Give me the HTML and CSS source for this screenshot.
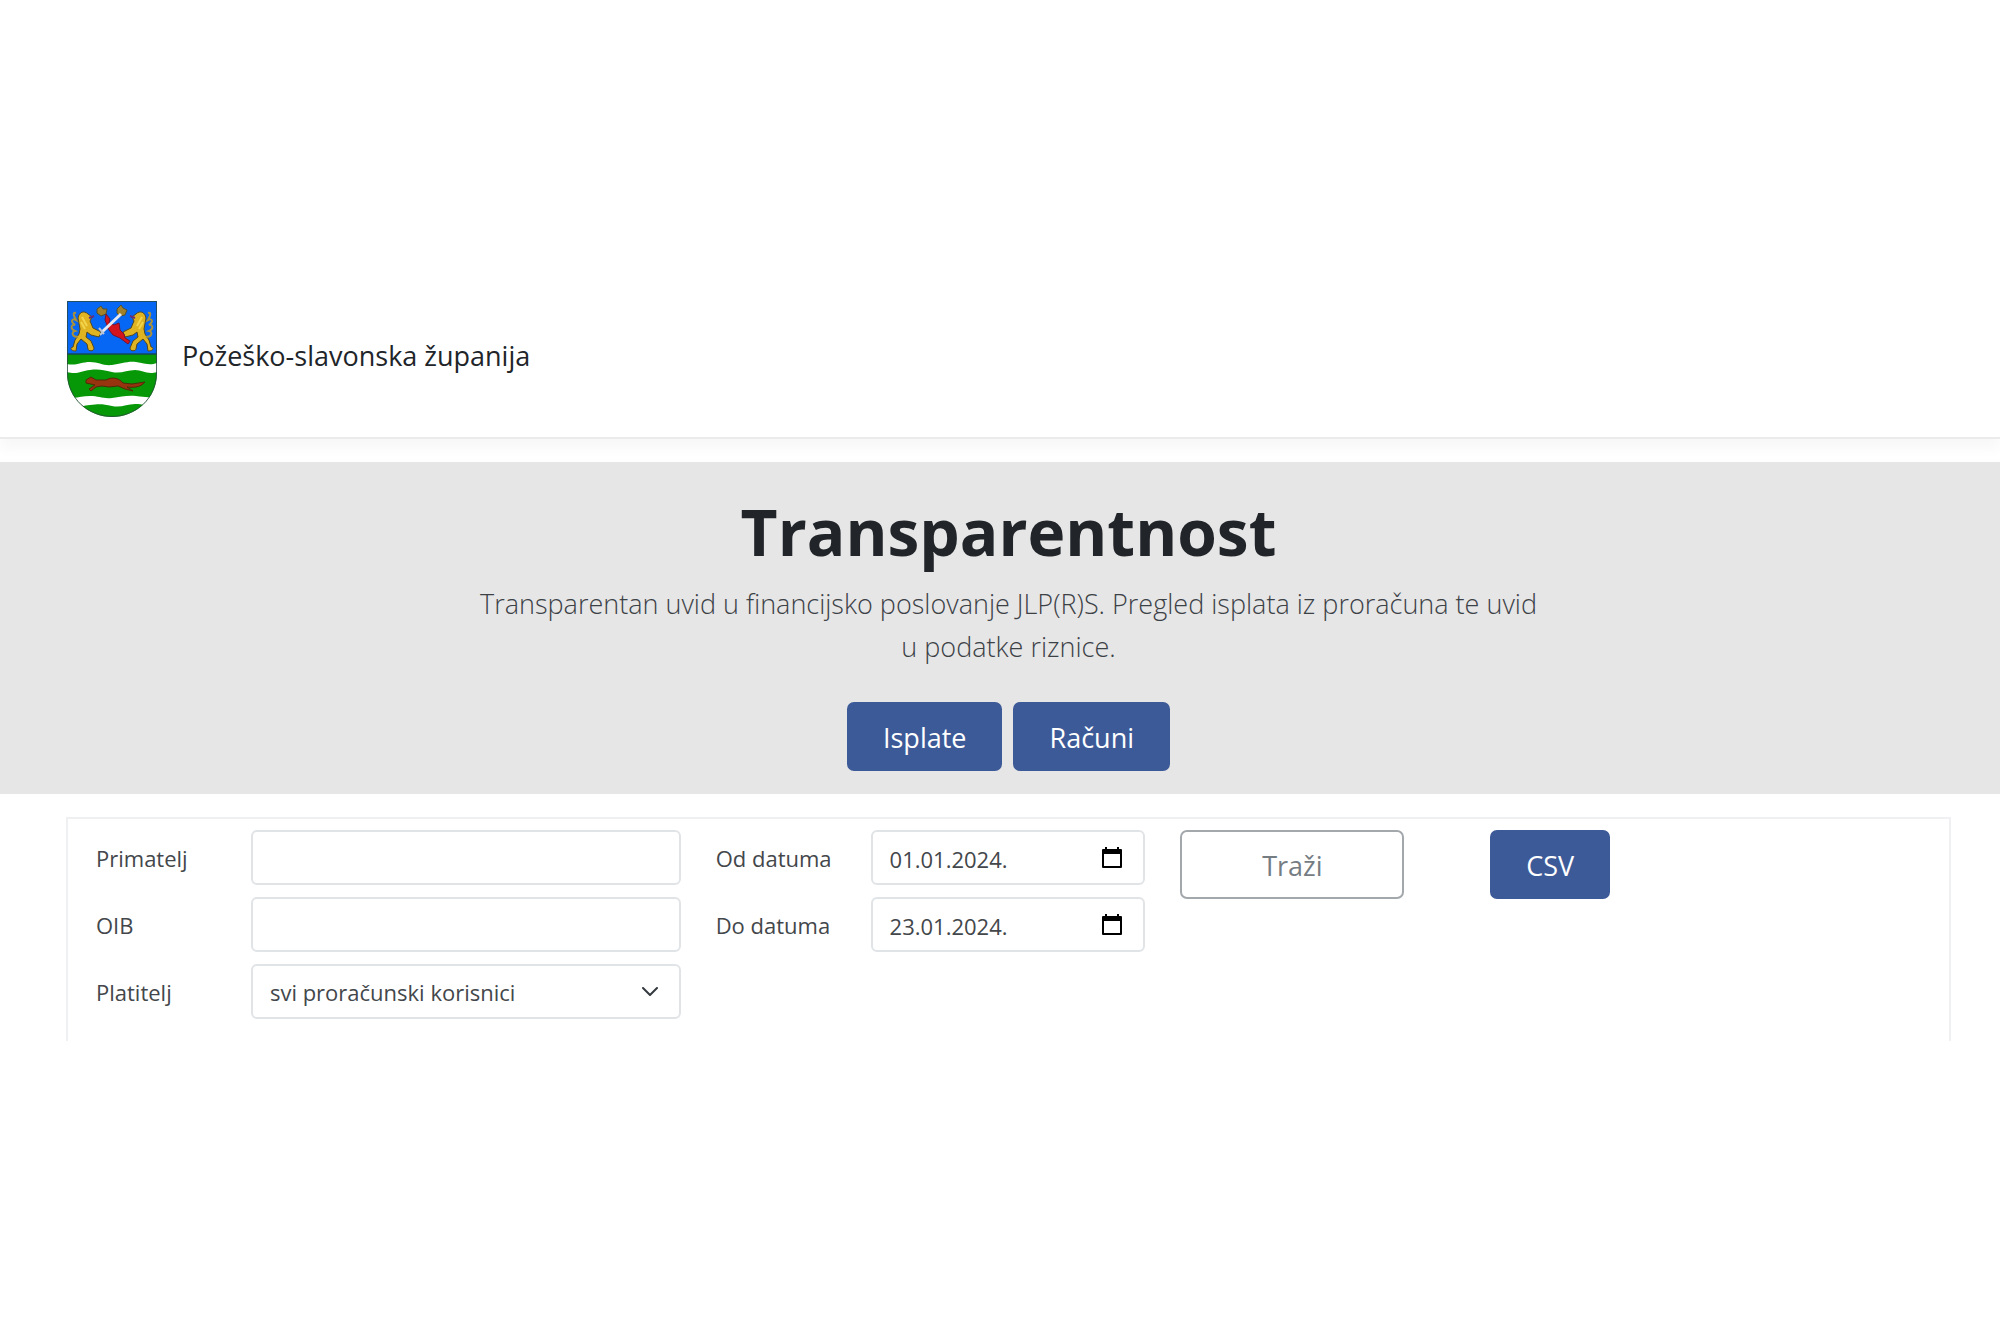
FILE: index.html
```html
<!DOCTYPE html>
<html lang="hr">
<head>
<meta charset="utf-8">
<meta name="viewport" content="width=device-width, initial-scale=1">
<title>Transparentnost</title>
<link rel="stylesheet" href="styles.css">
</head>
<body>
<header class="site-header">
  <svg class="crest" viewBox="0 0 90 116" aria-hidden="true">
    <defs>
      <clipPath id="shield"><path d="M0 0H90V72C90 98 68 116 45 116S0 98 0 72Z"/></clipPath>
      <g id="lion">
        <path d="M9 50C3 50 3 46 6 46L8 39L12 33L13 28L11 17C12 11 17 9 21 13L25 16L23 20L26 27L34 31L32 36L24 34L20 31L19 36L24 40L27 47C27 51 21 50 21 48L20 43L14 38L10 43Z" fill="#e0b323" stroke="#57481b" stroke-width="1"/>
        <path d="M11 36C5 36 4 31 8 30C3 28 4 23 8 24C3 20 5 17 9 19C6 14 6 11 9 12" fill="none" stroke="#a8913a" stroke-width="2"/>
        <path d="M15 16L20 25M14 21L18 28" stroke="#f2d54c" stroke-width="2" fill="none"/>
        <path d="M22 17L27 15" stroke="#6a2c79" stroke-width="2"/>
      </g>
    </defs>
    <g clip-path="url(#shield)">
      <path d="M0 0H90V54H0Z" fill="#0667f5"/>
      <path d="M0 53H90V116H0Z" fill="#069806"/>
      <path d="M0 53H90" stroke="#174558" stroke-width="1.5"/>
      <path d="M0 63C9 65 14 61 23 61S36 65 45 64S60 60 69 61S82 65 90 62V71C80 74 76 69 68 69S54 73 45 71S32 68 23 69S10 74 0 71Z" fill="#fff"/>
      <path d="M0 96C9 98 14 95 23 95S36 98 45 97S60 94 69 95S82 97 90 95V105C80 105 76 103 68 103S54 107 45 105S32 103 23 104S10 107 0 105Z" fill="#fff"/>
      <path d="M19 79L24 76L29 79L39 79C46 75 53 78 56 82L65 83L78 81C74 86 67 87 60 86L66 90L58 88L51 85L42 86L35 85L29 86L24 90L22 88L28 84L19 82Z" fill="#97330f" stroke="#4c2d08" stroke-width="1"/>
      <use href="#lion"/>
      <use href="#lion" transform="translate(90 0) scale(-1 1)"/>
      <path d="M30 8L34 5L36 8L40 8L39 13L34 15L30 12ZM50 8L54 4L56 7L60 9L58 14L53 15L50 12Z" fill="#a18129" stroke="#514f30" stroke-width="1"/>
      <path d="M39 13L43 18L42 22L47 24L52 22L53 29L57 33L58 37L63 40L61 43L57 40L53 37L46 34L42 29L40 24L38 19Z" fill="#d4141c" stroke="#701533" stroke-width="1"/>
      <path d="M35 31L54 13" stroke="#e6e9f3" stroke-width="3"/>
      <path d="M32 27L37 33M33 34L36 31" stroke="#bac4d5" stroke-width="2"/>
    </g>
    <path d="M.5 .5H89.500V72C89.500 98 68 115.500 45 115.500S.5 98 .5 72Z" fill="none" stroke="#29483e" stroke-opacity=".8"/>
  </svg>
  <span class="site-name">Požeško-slavonska županija</span>
</header>
<main>
  <section class="hero">
    <h1 class="hero-title">Transparentnost</h1>
    <p class="hero-lead">Transparentan uvid u financijsko poslovanje JLP(R)S. Pregled isplata iz proračuna te uvid u podatke riznice.</p>
    <div class="hero-actions">
      <button class="btn btn-primary" type="button">Isplate</button>
      <button class="btn btn-primary" type="button">Računi</button>
    </div>
  </section>
  <form class="filters">
    <label class="label" for="primatelj">Primatelj</label>
    <input class="control wide" id="primatelj" type="text">
    <label class="label" for="od">Od datuma</label>
    <div class="field">
      <input class="control" id="od" type="text" value="01.01.2024.">
      <svg class="calendar" viewBox="0 0 20 21" aria-hidden="true"><path d="M1 3H19V20H1Z" fill="none" stroke="#000" stroke-width="2" stroke-linejoin="round"/><path d="M1 2H19V7H1ZM3 0H5V3H3ZM15 0H17V3H15Z"/></svg>
    </div>
    <button class="btn btn-outline search" type="button">Traži</button>
    <button class="btn btn-primary export" type="button">CSV</button>

    <label class="label row-start" for="oib">OIB</label>
    <input class="control wide" id="oib" type="text">
    <label class="label" for="do">Do datuma</label>
    <div class="field">
      <input class="control" id="do" type="text" value="23.01.2024.">
      <svg class="calendar" viewBox="0 0 20 21" aria-hidden="true"><path d="M1 3H19V20H1Z" fill="none" stroke="#000" stroke-width="2" stroke-linejoin="round"/><path d="M1 2H19V7H1ZM3 0H5V3H3ZM15 0H17V3H15Z"/></svg>
    </div>

    <label class="label row-start" for="platitelj">Platitelj</label>
    <div class="field wide">
      <select class="control" id="platitelj"><option>svi proračunski korisnici</option></select>
      <svg class="chevron" viewBox="0 0 16 10" aria-hidden="true"><path d="M1 1L8 8L15 1" fill="none" stroke="#343a40" stroke-width="2" stroke-linecap="round" stroke-linejoin="round"/></svg>
    </div>
  </form>
</main>
</body>
</html>
```
FILE: styles.css
```css
* {
  box-sizing: border-box;
}

body {
  margin: 0;
  padding-top: 281px;
  background: #fff;
  color: #212529;
  font-family: "Open Sans", "Noto Sans", sans-serif;
  font-size: 22px;
  line-height: 33px;
}

.site-header {
  display: flex;
  align-items: center;
  gap: 24px;
  padding: 20px 49px 20px 66px;
  border-bottom: 2px solid #ebebeb;
  box-shadow: 0 10px 12px rgba(0, 0, 0, 0.03);
}

.crest {
  flex: none;
  width: 92px;
  height: 116px;
}

.site-name {
  padding-bottom: 6px;
  font-size: 27px;
  line-height: 40px;
}

.hero {
  position: relative;
  display: flex;
  flex-direction: column;
  align-items: center;
  margin-top: 23px;
  padding: 28px 49px 23px 66px;
  background: #e6e6e6;
  text-align: center;
}

.hero-title {
  margin: 0;
  font-size: 64px;
  font-weight: 700;
  line-height: 84px;
}

.hero-lead {
  max-width: 1070px;
  margin: 8px 0 34px;
  color: #3c4146;
  font-size: 27px;
  font-weight: 300;
  line-height: 43px;
}

.hero-actions {
  display: flex;
  gap: 11px;
}

.btn {
  height: 69px;
  padding: 2px 34px 0;
  border: 2px solid #3d5a98;
  border-radius: 7px;
  font-family: inherit;
  font-size: 27px;
  line-height: 40px;
}

.btn-primary {
  background: #3d5a98;
  color: #fff;
}

.btn-outline {
  border-color: #a3a8ad;
  background: #fff;
  color: #757c82;
}

.filters {
  display: grid;
  grid-template-columns: repeat(12, 1fr);
  gap: 12px 35px;
  margin: 23px 49px 0 66px;
  padding: 11px 29px 22px 28px;
  border: 2px solid #eff0f1;
  border-bottom: 0;
}

.label {
  align-self: center;
  padding-top: 2px;
  color: #43474b;
  white-space: nowrap;
}

.row-start {
  grid-column: 1;
}

.wide {
  grid-column: span 3;
}

.field {
  position: relative;
  grid-column: span 2;
}

.field.wide {
  grid-column: span 3;
}

.control {
  width: 100%;
  height: 55px;
  padding: 2px 17px 0;
  border: 2px solid #e1e4e7;
  border-radius: 6px;
  appearance: none;
  background: #fff;
  color: #43474b;
  font: inherit;
}

.control.wide {
  width: auto;
}

.calendar,
.chevron {
  position: absolute;
  right: 23px;
  pointer-events: none;
}

.calendar {
  top: 17px;
  width: 20px;
  height: 21px;
}

.chevron {
  top: 23px;
  width: 16px;
  height: 10px;
}

.search,
.export {
  grid-row: 1 / span 2;
  align-self: start;
}

.search {
  grid-column: 8 / span 2;
  margin-right: 51px;
}

.export {
  grid-column: 10;
}
```
